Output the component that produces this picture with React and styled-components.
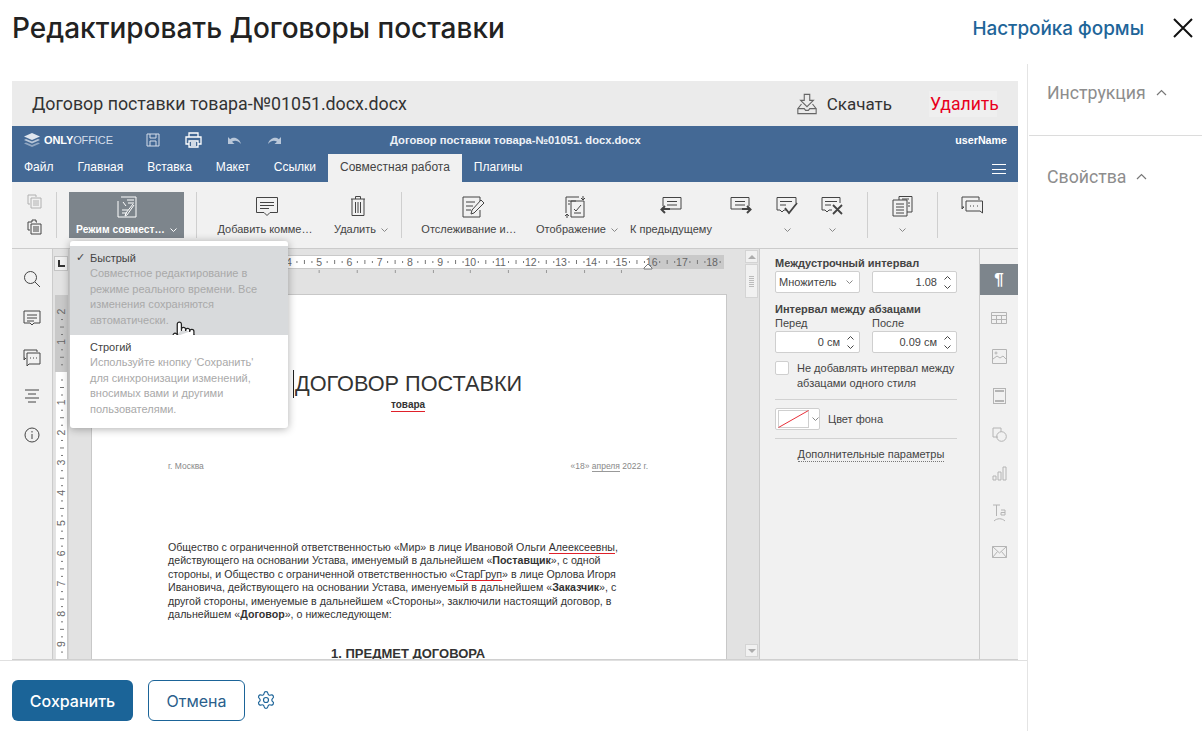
import styled, { createGlobalStyle } from 'styled-components';
import { Pointer, Settings } from 'lucide-react';

const GlobalStyle = createGlobalStyle`
  html, body { margin: 0; padding: 0; background: #fff; }
  body { font-family: Roboto, "Liberation Sans", sans-serif; color: #222; }
  * { box-sizing: border-box; }
`;

const Page = styled.div`
  width: 1202px;
  height: 731px;
  overflow: hidden;
  display: flex;
  flex-direction: column;
`;

const Header = styled.header`
  height: 64px;
  flex: none;
  display: flex;
  align-items: center;
  padding: 0 9px 8px 12px;
`;

const Title = styled.h1`
  margin: 0;
  flex: 1;
  font-family: Inter, Roboto, sans-serif;
  font-size: 28px;
  font-weight: 500;
  color: #222;
  white-space: nowrap;
`;

const FormLink = styled.a`
  font-family: Inter, Roboto, sans-serif;
  font-size: 18.9px;
  font-weight: 500;
  color: #1e6599;
  margin-right: 29px;
`;

const Columns = styled.div`
  flex: 1;
  min-height: 0;
  display: flex;
`;

const MainCol = styled.main`
  width: 1027px;
  flex: none;
  display: flex;
  flex-direction: column;
`;

const SideCol = styled.aside`
  flex: 1;
  border-left: 1px solid #e4e4e4;
`;

const SideSection = styled.div`
  height: 72px;
  padding: 17px 0 0 18px;
  margin-left: 1px;
  border-bottom: ${p => (p.$line ? '1px solid #dcdcdc' : 'none')};
  display: flex;
  align-items: flex-start;
  gap: 10px;
  font-size: 17.7px;
  color: #8d8d8d;
  line-height: 24px;
  & + & { height: 80px; padding-top: 29px; }
`;

const CardWrap = styled.div`
  height: 596px;
  flex: none;
  padding: 17px 9px 0 12px;
`;

const Card = styled.section`
  height: 579px;
  overflow: hidden;
  display: flex;
  flex-direction: column;
  border-bottom: 1px solid #d0d0d0;
`;

const FileBar = styled.div`
  height: 45px;
  flex: none;
  background: #ebebeb;
  display: flex;
  align-items: center;
  padding: 0 21px 0 20px;
  font-size: 17.8px;
  color: #333;
`;

const FileName = styled.div`
  flex: 1;
  white-space: nowrap;
`;

const Download = styled.div`
  display: flex;
  align-items: center;
  gap: 9px;
  margin-right: 37px;
  font-size: 17px;
`;

const Remove = styled.div`
  width: 68px;
  height: 26px;
  line-height: 26px;
  padding-left: 1px;
  background: #efefef;
  color: #e8001c;
  font-size: 17.6px;
  white-space: nowrap;
`;

const Editor = styled.div`
  flex: 1;
  min-height: 0;
  display: flex;
  flex-direction: column;
  font-family: "Liberation Sans", Arial, sans-serif;
  font-size: 11px;
`;

const TitleBar = styled.div`
  height: 28px;
  flex: none;
  background: #446995;
  display: flex;
  align-items: center;
  position: relative;
  color: #fff;
  padding: 0 11px 0 12px;
`;

const Logo = styled.div`
  width: 122px;
  display: flex;
  align-items: center;
  gap: 4px;
  font-size: 11px;
  font-weight: 700;
  letter-spacing: -0.1px;
  span { font-weight: 400; color: #d5deea; }
`;

const HeadIcons = styled.div`
  width: 140px;
  display: flex;
  align-items: center;
  gap: 25px;
`;

const DocTitle = styled.div`
  position: absolute;
  left: 378px;
  font-size: 11.2px;
  font-weight: 700;
  color: #eef2f7;
  white-space: nowrap;
`;

const UserName = styled.div`
  margin-left: auto;
  font-weight: 700;
  font-size: 10.7px;
`;

const TabBar = styled.nav`
  height: 28px;
  flex: none;
  background: #446995;
  display: flex;
  align-items: stretch;
`;

const Tab = styled.div`
  padding: 0 12px;
  font-size: 12px;
  line-height: 27px;
  color: ${p => (p.$active ? '#444' : '#fff')};
  background: ${p => (p.$active ? '#f1f1f1' : 'transparent')};
`;

const Burger = styled.div`
  margin: 10px 12px 0 auto;
  width: 14px;
  height: 10px;
  border-top: 1px solid #fff;
  border-bottom: 1px solid #fff;
  position: relative;
  &::after {
    content: '';
    position: absolute;
    left: 0;
    right: 0;
    top: 3.5px;
    height: 1px;
    background: #fff;
  }
`;

const Toolbar = styled.div`
  height: 67px;
  flex: none;
  background: #f1f1f1;
  border-bottom: 1px solid #cbcbcb;
  display: flex;
  align-items: flex-start;
  padding-top: 10px;
`;

const ClipCol = styled.div`
  width: 44px;
  height: 46px;
  padding-top: 2px;
  display: flex;
  flex-direction: column;
  align-items: center;
  gap: 10px;
`;

const VLine = styled.div`
  width: 1px;
  height: 46px;
  flex: none;
  background: #cfcfcf;
  margin-right: ${p => p.$mr || 0}px;
  margin-left: ${p => p.$ml || 0}px;
`;

const ToolItem = styled.div`
  width: ${p => p.$w}px;
  height: 46px;
  flex: none;
  display: flex;
  flex-direction: column;
  align-items: center;
  justify-content: space-between;
  padding: 3px 0 2px;
  margin-right: ${p => p.$mr || 0}px;
  color: #444;
  font-size: 11px;
  white-space: nowrap;
  background: ${p => (p.$on ? '#7d858c' : 'transparent')};
  & > svg:first-child { transform: translateX(${p => p.$shift || 0}px); }
`;

const ToolLabel = styled.div`
  display: flex;
  align-items: center;
  gap: 5px;
  height: 13px;
  line-height: 13px;
  color: ${p => (p.$on ? '#fff' : '#444')};
  font-weight: ${p => (p.$on ? 700 : 400)};
  font-size: ${p => (p.$on ? '10.3px' : '11px')};
`;

const Body = styled.div`
  flex: 1;
  min-height: 0;
  display: flex;
  position: relative;
  z-index: 2;
`;

const LeftBar = styled.div`
  width: 40px;
  flex: none;
  background: #f1f1f1;
  display: flex;
  flex-direction: column;
  align-items: center;
  gap: 19px;
  padding-top: 20px;
`;

const RulerCol = styled.div`
  width: 16px;
  flex: none;
  background: #e2e2e2;
  border-left: 1px solid #cbcbcb;
  padding: 7px 0 0 1px;
  overflow: hidden;
`;

const CornerBtn = styled.div`
  width: 14px;
  height: 15px;
  border: 1px solid #c4c4c4;
  background: #f1f1f1;
  margin-bottom: 24px;
  display: flex;
  align-items: center;
  justify-content: center;
  &::before {
    content: '';
    width: 5px;
    height: 5px;
    border-left: 2px solid #333;
    border-bottom: 2px solid #333;
  }
`;

const Canvas = styled.div`
  width: 677px;
  flex: none;
  background: #e2e2e2;
  overflow: hidden;
  padding-top: 6px;
  border-left: 1px solid #d4d4d4;
`;

const DocPage = styled.article`
  width: 636px;
  height: 400px;
  margin: 21px 0 0 22px;
  background: #fff;
  border: 1px solid #c8c8c8;
  border-bottom: none;
  padding: 0 0 0 76px;
  color: #333;
  position: relative;
`;

const DocHeading = styled.div`
  margin-top: 75px;
  margin-left: 125px;
  font-size: 21.7px;
  line-height: 28px;
  color: #333;
  white-space: nowrap;
  border-left: 1px solid #222;
  padding-left: 1px;
  width: fit-content;
`;

const DocSub = styled.div`
  margin: 0 0 0 223px;
  font-size: 10px;
  font-weight: 700;
  line-height: 13px;
  width: fit-content;
  border-bottom: 1px solid #e0202a;
`;

const CityRow = styled.div`
  margin-top: 49px;
  width: 480px;
  display: flex;
  justify-content: space-between;
  font-size: 8.5px;
  color: #888;
  line-height: 10px;
`;

const Para = styled.p`
  margin: 70px 0 0;
  font-size: 10.65px;
  line-height: 13.45px;
  white-space: nowrap;
  color: #333;
`;

const RedMark = styled.span`
  border-bottom: 1px solid #e0202a;
`;

const GrayMark = styled.span`
  border-bottom: 1px solid #999;
`;

const Section = styled.div`
  margin: 27px 0 0 163px;
  font-size: 13px;
  line-height: 10px;
  font-weight: 700;
  white-space: nowrap;
`;

const ScrollBar = styled.div`
  width: 15px;
  flex: none;
  background: #e2e2e2;
  border-right: 1px solid #cbcbcb;
  padding: 1px 1px 2px 0;
  display: flex;
  flex-direction: column;
  align-items: center;
`;

const ScrollBtn = styled.div`
  width: 13px;
  height: 13px;
  background: #f1f1f1;
  border: 1px solid #d4d4d4;
  display: flex;
  align-items: center;
  justify-content: center;
  margin-top: ${p => (p.$bottom ? 'auto' : '0')};
  &::before {
    content: '';
    border-left: 4px solid transparent;
    border-right: 4px solid transparent;
    border-bottom: ${p => (p.$bottom ? '0' : '4px solid #adadad')};
    border-top: ${p => (p.$bottom ? '4px solid #adadad' : '0')};
  }
`;

const ScrollThumb = styled.div`
  width: 13px;
  height: 34px;
  margin-top: 1px;
  background: #f1f1f1;
  border: 1px solid #d4d4d4;
  display: flex;
  flex-direction: column;
  align-items: center;
  justify-content: center;
  gap: 1px;
  i { display: block; width: 5px; height: 1px; background: #bbb; }
`;

const Props = styled.div`
  width: 220px;
  flex: none;
  background: #f1f1f1;
  border-right: 1px solid #cbcbcb;
  padding: 7px 22px 0 15px;
  color: #444;
`;

const PropTitle = styled.div`
  font-weight: 700;
  font-size: 11px;
  line-height: 14px;
  margin-top: ${p => p.$mt || 0}px;
  white-space: nowrap;
`;

const PropRow = styled.div`
  display: flex;
  justify-content: space-between;
  margin-top: ${p => p.$mt || 0}px;
`;

const PropCell = styled.div`
  width: 85px;
`;

const PropLabel = styled.div`
  font-size: 11px;
  line-height: 15px;
`;

const Field = styled.div`
  width: 85px;
  height: 22px;
  background: #fff;
  border: 1px solid #cfcfcf;
  border-radius: 2px;
  display: flex;
  align-items: center;
  justify-content: ${p => (p.$select ? 'space-between' : 'flex-end')};
  padding: ${p => (p.$select ? '0 6px 0 3px' : '0 5px 0 0')};
  font-size: 11px;
  color: #444;
  gap: 7px;
`;

const Spin = styled.div`
  display: flex;
  flex-direction: column;
  gap: 5px;
`;

const CheckRow = styled.div`
  display: flex;
  gap: 8px;
  margin-top: 8px;
`;

const CheckBox = styled.div`
  width: 14px;
  height: 14px;
  flex: none;
  background: #fff;
  border: 1px solid #cfcfcf;
  border-radius: 2px;
`;

const CheckText = styled.div`
  font-size: 11px;
  line-height: 15px;
`;

const Rule = styled.div`
  height: 1px;
  background: #d2d2d2;
  margin-top: ${p => p.$mt}px;
`;

const ColorRow = styled.div`
  display: flex;
  align-items: center;
  gap: 8px;
  margin-top: 8px;
`;

const Swatch = styled.div`
  width: 45px;
  height: 22px;
  background: #fff;
  border: 1px solid #cfcfcf;
  border-radius: 2px;
  display: flex;
  align-items: center;
  gap: 3px;
  padding-left: 2px;
`;

const MoreLink = styled.div`
  width: fit-content;
  margin: 9px auto 0;
  padding-left: 10px;
  span { border-bottom: 1px dotted #777; line-height: 13px; display: block; }
`;

const RightTabs = styled.div`
  flex: 1;
  background: #f1f1f1;
  padding-top: 15px;
  display: flex;
  flex-direction: column;
  align-items: center;
`;

const RightTab = styled.div`
  width: 100%;
  height: 39px;
  display: flex;
  align-items: center;
  justify-content: center;
`;

const ActiveTab = styled.div`
  width: 100%;
  height: 31px;
  background: #7d858c;
  color: #fff;
  font-size: 17px;
  font-weight: 700;
  display: flex;
  align-items: center;
  justify-content: center;
  margin-bottom: 3px;
`;

const Popover = styled.div`
  position: absolute;
  left: 58px;
  top: -8px;
  width: 218px;
  height: 187px;
  padding: 5px 0 4px;
  background: #fff;
  border-radius: 3px;
  box-shadow: 0 1px 8px rgba(0, 0, 0, 0.32);
  z-index: 5;
`;

const ModeRow = styled.div`
  height: 89px;
  padding: 4px 10px 0 20px;
  position: relative;
  background: ${p => (p.$on ? '#d8dadc' : '#fff')};
`;

const ModeName = styled.div`
  font-size: 11px;
  line-height: 16px;
  color: #444;
  position: relative;
  ${p => p.$checked && `
    &::before {
      content: '✓';
      position: absolute;
      left: -14px;
      top: 0;
      font-family: "DejaVu Sans", sans-serif;
      font-weight: 700;
    }
  `}
`;

const ModeDesc = styled.div`
  width: 176px;
  font-size: 11px;
  line-height: 15.7px;
  color: #a9a9a9;
`;

const HandCursor = styled.div`
  position: absolute;
  left: 101px;
  top: 74px;
  line-height: 0;
`;

const Footer = styled.footer`
  flex: 1;
  border-top: 1px solid #e0e0e0;
  display: flex;
  align-items: flex-start;
  padding: 19px 0 0 12px;
`;

const SaveBtn = styled.button`
  width: 121px;
  height: 41px;
  border: none;
  border-radius: 6px;
  background: #1b6498;
  color: #fff;
  font: 500 16px Inter, Roboto, sans-serif;
`;

const CancelBtn = styled.button`
  width: 97px;
  height: 41px;
  margin-left: 15px;
  border: 1px solid #1b6498;
  border-radius: 6px;
  background: #fff;
  color: #2a5f8c;
  font: 400 16px Inter, Roboto, sans-serif;
`;

const GearBtn = styled.div`
  margin: 10px 0 0 11px;
  line-height: 0;
  color: #1e6599;
`;

const Glyph = ({ w = 24, h = 24, c = '#444', sw = 1, children }) => (
  <svg width={w} height={h} viewBox={`0 0 ${w} ${h}`} fill="none" stroke={c} strokeWidth={sw}>
    {children}
  </svg>
);

const Caret = ({ c = '#888', up }) => (
  <svg width="7" height="4" viewBox="0 0 7 4" fill="none" stroke={c} strokeWidth="1">
    <path d={up ? 'M0.5 3.5L3.5 0.5L6.5 3.5' : 'M0.5 0.5L3.5 3.5L6.5 0.5'} />
  </svg>
);

const Chevron = () => (
  <svg width="11" height="7" viewBox="0 0 11 7" fill="none" stroke="#777" strokeWidth="1.2" style={{ marginTop: 8 }}>
    <path d="M1 6L5.5 1.5L10 6" />
  </svg>
);

const Bubble = () => (
  <>
    <path d="M1.5 2.5H22.5V17.5H15L12 20.5L9 17.5H1.5Z" />
    <path d="M5 7.5H19M5 10.5H19M5 13.5H14" />
  </>
);

// undo arrow; redo is the same shape mirrored
const HistoryArrow = ({ flip }) => (
  <svg width="15" height="9" viewBox="0 0 15 9" fill="#b9c7d9" style={{ transform: flip ? 'scaleX(-1)' : 'none' }}>
    <path d="M1 1V8H7.5L5 5.8C8 4 11 4.8 14 8C12.5 2.5 7 0 3.2 3.2Z" />
  </svg>
);

function Ruler() {
  const step = 30.23;
  const origin = 98;
  const nums = Array.from({ length: 19 }, (_, i) => i);
  return (
    <svg width="654" height="18" viewBox="0 0 654 18" style={{ display: 'block', marginLeft: 1 }}>
      <rect x="0" y="0" width="654" height="14" fill="#c9c9c9" />
      <rect x="0" y="1" width="579" height="12" fill="#fff" />
      {nums.map(n => (
        <g key={n}>
          <text x={origin + n * step} y="11" fontSize="10.5" fill="#666" textAnchor="middle" fontFamily="Liberation Sans">
            {n > 0 ? n : ''}
          </text>
          <rect x={origin + n * step + 7.5} y="6" width="1" height="2" fill="#777" />
          <rect x={origin + n * step + 15} y="5" width="1" height="4" fill="#777" />
          <rect x={origin + n * step + 22.5} y="6" width="1" height="2" fill="#777" />
        </g>
      ))}
      {[5, 6.26, 7.52, 8.78, 10, 11.26, 12.52, 13.78, 15].map(n => (
        <rect key={n} x={origin + n * step - 0.5} y="15" width="1" height="3" fill="#999" />
      ))}
      <path d="M574 13L578 9L582 13V14H574Z" fill="#fff" stroke="#777" />
    </svg>
  );
}

function SideRuler() {
  const rows = [-2, -1, 0, 1, 2, 3, 4, 5, 6, 7, 8, 9];
  return (
    <svg width="13" height="366" viewBox="0 0 13 366" style={{ display: 'block', marginLeft: 1 }}>
      <rect width="12.5" height="366" fill="#fff" stroke="#c9c9c9" />
      <rect width="13" height="77" fill="#c9c9c9" />
      {rows.map(n => {
        const y = 77 + n * 30.23;
        return (
          <g key={n}>
            {n !== 0 && (
              <text
                transform={`translate(10 ${y}) rotate(-90)`}
                fontSize="10.5"
                fill="#666"
                textAnchor="middle"
                fontFamily="Liberation Sans"
              >
                {Math.abs(n)}
              </text>
            )}
            <rect x="6" y={y + 7.5} width="2" height="1" fill="#777" />
            <rect x="5" y={y + 15} width="4" height="1" fill="#777" />
            <rect x="6" y={y + 22.5} width="2" height="1" fill="#777" />
          </g>
        );
      })}
    </svg>
  );
}

export default function App() {
  return (
    <>
      <GlobalStyle />
      <Page>
        <Header>
          <Title>Редактировать Договоры поставки</Title>
          <FormLink>Настройка формы</FormLink>
          <svg width="20" height="20" viewBox="0 0 20 20" stroke="#111" strokeWidth="2">
            <path d="M1 1L19 19M19 1L1 19" />
          </svg>
        </Header>
        <Columns>
          <MainCol>
            <CardWrap>
              <Card>
                <FileBar>
                  <FileName>Договор поставки товара-№01051.docx.docx</FileName>
                  <Download>
                    <svg width="22" height="22" viewBox="0 0 22 24" fill="none" stroke="#666" strokeWidth="1.2">
                      <path d="M8 1.5H14V8H18L11 15L4 8H8Z" />
                      <path d="M5 12L1 17V22.5H21V17L17 12" />
                      <path d="M1 17H8L9.5 19H12.5L14 17H21" />
                    </svg>
                    Скачать
                  </Download>
                  <Remove>Удалить</Remove>
                </FileBar>
                <Editor>
                  <TitleBar>
                    <Logo>
                      <svg width="16" height="14" viewBox="0 0 16 14" fill="#dfe6ef">
                        <path d="M8 0L16 3.5L8 7L0 3.5Z" />
                        <path d="M2 6L8 8.6L14 6L16 7L8 10.5L0 7Z" opacity="0.75" />
                        <path d="M2 9.5L8 12L14 9.5L16 10.5L8 14L0 10.5Z" opacity="0.5" />
                      </svg>
                      <div>ONLY<span>OFFICE</span></div>
                    </Logo>
                    <HeadIcons>
                      <Glyph w={14} h={14} c="#d5deea">
                        <path d="M1 1H13V13H1ZM4 1V5H10V1M4 13V8H10V13" />
                      </Glyph>
                      <Glyph w={17} h={16} c="#fff" sw={1.3}>
                        <path d="M4 5V1H13V5M4 12H1V5H16V12H13M4 9H13V15H4ZM6 11H11M6 13H11" />
                      </Glyph>
                      <HistoryArrow />
                      <HistoryArrow flip />
                    </HeadIcons>
                    <DocTitle>Договор поставки товара-№01051. docx.docx</DocTitle>
                    <UserName>userName</UserName>
                  </TitleBar>
                  <TabBar>
                    <Tab>Файл</Tab>
                    <Tab>Главная</Tab>
                    <Tab>Вставка</Tab>
                    <Tab>Макет</Tab>
                    <Tab>Ссылки</Tab>
                    <Tab $active>Совместная работа</Tab>
                    <Tab>Плагины</Tab>
                    <Burger />
                  </TabBar>
                  <Toolbar>
                    <ClipCol>
                      <Glyph w={15} h={15} c="#b0b0b0">
                        <path d="M1 1H9V3M1 1V10H3M4 4H14V14H4ZM6 7H12M6 9H12M6 11H12" />
                      </Glyph>
                      <Glyph w={15} h={16} c="#444">
                        <path d="M1 3H5V1H9V3H10M1 3V11H3M4 5H14V15H4ZM6 8H12M6 10H12M6 12H12" />
                      </Glyph>
                    </ClipCol>
                    <VLine $mr={12} />
                    <ToolItem $w={115} $mr={12} $on>
                      <Glyph w={22} h={24} c="#fff">
                        <path d="M5 2H20V22H2V6M7 7L10 11M11 5H18M12 8H18M6 15H12M6 18H11M18 10L11 20L9 21L10 18L17 9" />
                      </Glyph>
                      <ToolLabel $on>
                        Режим совмест… <Caret c="#fff" />
                      </ToolLabel>
                    </ToolItem>
                    <VLine />
                    <ToolItem $w={136} $shift={2}>
                      <Glyph w={24} h={22}><Bubble /></Glyph>
                      <ToolLabel>Добавить комме…</ToolLabel>
                    </ToolItem>
                    <ToolItem $w={56} $mr={12} $shift={-3}>
                      <Glyph w={16} h={22}>
                        <path d="M1 4H15M5.5 4V1.5H10.5V4M2 4V20.5H14V4M5.5 7V18M8 7V18M10.5 7V18" />
                      </Glyph>
                      <ToolLabel>Удалить <Caret /></ToolLabel>
                    </ToolItem>
                    <VLine />
                    <ToolItem $w={134} $shift={4}>
                      <Glyph w={24} h={24}>
                        <path d="M19 6V2H2V22H19V15M5 7H14M5 11H12M5 15H10M10 19L11 15L20 5L23 8L13 18Z" />
                      </Glyph>
                      <ToolLabel>Отслеживание и…</ToolLabel>
                    </ToolItem>
                    <ToolItem $w={82} $shift={-2}>
                      <Glyph w={22} h={24}>
                        <path d="M15 2H2V18M7 6H20V22H7ZM4 6H12M4 9H6M10 14L12 16L17 10M10 18H17M19 1V4M17 3L19 5L21 3M3 19V23M1 21L3 19L5 21" />
                      </Glyph>
                      <ToolLabel>Отображение <Caret /></ToolLabel>
                    </ToolItem>
                    <ToolItem $w={106}>
                      <Glyph w={24} h={22}>
                        <path d="M4 11V2.5H22V14H11M8 6.5H18M8 10H18" />
                        <path d="M11 14H3M6 11L2.5 14.5L6 18" strokeWidth="2" />
                      </Glyph>
                      <ToolLabel>К предыдущему</ToolLabel>
                    </ToolItem>
                    <ToolItem $w={34}>
                      <Glyph w={24} h={22}>
                        <path d="M20 11V2.5H2V14H13M6 6.5H16M6 10H16" />
                        <path d="M13 14H21M18 11L21.5 14.5L18 18" strokeWidth="2" />
                      </Glyph>
                    </ToolItem>
                    <ToolItem $w={58}>
                      <Glyph w={24} h={22}>
                        <path d="M12 15H9L7 17L5 15H2V2.5H21V8M5 6.5H17M5 10H11" />
                        <path d="M10 13L14 18L22 8" strokeWidth="1.8" />
                      </Glyph>
                      <ToolLabel><Caret /></ToolLabel>
                    </ToolItem>
                    <ToolItem $w={32} $mr={19}>
                      <Glyph w={24} h={22}>
                        <path d="M12 15H9L7 17L5 15H2V2.5H20V8M5 6.5H17M5 10H11" />
                        <path d="M13 10L22 19M22 10L13 19" strokeWidth="1.8" />
                      </Glyph>
                      <ToolLabel><Caret /></ToolLabel>
                    </ToolItem>
                    <VLine />
                    <ToolItem $w={69}>
                      <Glyph w={22} h={24}>
                        <path d="M7 5V1.5H20V17H15M4 5H15V21H1V5H4M4 9H12M4 12H12M4 15H12M4 18H12M10 4H17M16 8H18M16 11H18" />
                      </Glyph>
                      <ToolLabel><Caret /></ToolLabel>
                    </ToolItem>
                    <VLine />
                    <ToolItem $w={68}>
                      <Glyph w={24} h={20}>
                        <path d="M4 12H2V2H19V5M2 12V14L4 12" />
                        <path d="M6 6H22.5V18L20 16H6ZM10 11H11M13 11H14M17 11H18" />
                      </Glyph>
                    </ToolItem>
                  </Toolbar>
                  <Body>
                    <LeftBar>
                      <Glyph w={20} h={20}>
                        <circle cx="8.5" cy="8.5" r="6" />
                        <path d="M13 13L18 18" />
                      </Glyph>
                      <Glyph w={20} h={20}>
                        <path d="M2 3H18V15H12L10 17L8 15H2ZM5 7H15M5 10H15M5 13H12" />
                      </Glyph>
                      <Glyph w={20} h={20}>
                        <path d="M3 11H2V3H15V5M2 11V13L4 11" />
                        <path d="M5 6H18V17H7L5 19ZM8 11H9M11 11H12M14 11H15" />
                      </Glyph>
                      <Glyph w={20} h={20}>
                        <path d="M3 4H17M6 8H14M3 12H17M6 16H14" />
                      </Glyph>
                      <Glyph w={20} h={20}>
                        <circle cx="10" cy="10" r="7" />
                        <path d="M10 9V14M10 6V7.5" />
                      </Glyph>
                    </LeftBar>
                    <RulerCol>
                      <CornerBtn />
                      <SideRuler />
                    </RulerCol>
                    <Canvas>
                      <Ruler />
                      <DocPage>
                        <DocHeading>ДОГОВОР ПОСТАВКИ</DocHeading>
                        <DocSub>товара</DocSub>
                        <CityRow>
                          <div>г. Москва</div>
                          <div>«18» <GrayMark>апреля</GrayMark> 2022 г.</div>
                        </CityRow>
                        <Para>
                          Общество с ограниченной ответственностью «Мир» в лице Ивановой Ольги <RedMark>Алеексеевны</RedMark>,<br />
                          действующего на основании Устава, именуемый в дальнейшем «<b>Поставщик</b>», с одной<br />
                          стороны, и Общество с ограниченной ответственностью «<RedMark>СтарГруп</RedMark>» в лице Орлова Игоря<br />
                          Ивановича, действующего на основании Устава, именуемый в дальнейшем «<b>Заказчик</b>», с<br />
                          другой стороны, именуемые в дальнейшем «Стороны», заключили настоящий договор, в<br />
                          дальнейшем «<b>Договор</b>», о нижеследующем:
                        </Para>
                        <Section>1. ПРЕДМЕТ ДОГОВОРА</Section>
                      </DocPage>
                    </Canvas>
                    <ScrollBar>
                      <ScrollBtn />
                      <ScrollThumb>
                        <i /><i /><i /><i /><i /><i />
                      </ScrollThumb>
                      <ScrollBtn $bottom />
                    </ScrollBar>
                    <Props>
                      <PropTitle>Междустрочный интервал</PropTitle>
                      <PropRow $mt={1}>
                        <Field $select>
                          Множитель <Caret />
                        </Field>
                        <Field>
                          1.08
                          <Spin><Caret up c="#444" /><Caret c="#444" /></Spin>
                        </Field>
                      </PropRow>
                      <PropTitle $mt={9}>Интервал между абзацами</PropTitle>
                      <PropRow>
                        <PropCell>
                          <PropLabel>Перед</PropLabel>
                          <Field>
                            0 см
                            <Spin><Caret up c="#444" /><Caret c="#444" /></Spin>
                          </Field>
                        </PropCell>
                        <PropCell>
                          <PropLabel>После</PropLabel>
                          <Field>
                            0.09 см
                            <Spin><Caret up c="#444" /><Caret c="#444" /></Spin>
                          </Field>
                        </PropCell>
                      </PropRow>
                      <CheckRow>
                        <CheckBox />
                        <CheckText>Не добавлять интервал между абзацами одного стиля</CheckText>
                      </CheckRow>
                      <Rule $mt={8} />
                      <ColorRow>
                        <Swatch>
                          <svg width="31" height="18" viewBox="0 0 31 18" fill="#fff" stroke="#cfcfcf">
                            <rect x="0.5" y="0.5" width="30" height="17" />
                            <path d="M0.5 17.5L30.5 0.5" stroke="#e8303a" />
                          </svg>
                          <Caret />
                        </Swatch>
                        Цвет фона
                      </ColorRow>
                      <Rule $mt={8} />
                      <MoreLink><span>Дополнительные параметры</span></MoreLink>
                    </Props>
                    <RightTabs>
                      <ActiveTab>¶</ActiveTab>
                      <RightTab>
                        <Glyph w={16} h={12} c="#b4b4b4">
                          <path d="M0.5 0.5H15.5V11.5H0.5ZM0.5 3.5H15.5M0.5 7.5H15.5M5.5 3.5V11.5M10.5 3.5V11.5" />
                        </Glyph>
                      </RightTab>
                      <RightTab>
                        <Glyph w={15} h={15} c="#b4b4b4">
                          <path d="M0.5 0.5H14.5V14.5H0.5ZM1 10L5 7L8 9L11 7L14 10" />
                          <circle cx="4" cy="4" r="1" />
                        </Glyph>
                      </RightTab>
                      <RightTab>
                        <svg width="13" height="16" viewBox="0 0 13 16" fill="none" stroke="#b4b4b4">
                          <rect x="0.5" y="0.5" width="12" height="15" />
                          <path d="M2 3H11M2 13H11" strokeWidth="2" />
                        </svg>
                      </RightTab>
                      <RightTab>
                        <Glyph w={15} h={15} c="#b4b4b4">
                          <path d="M6 10H1V1H9V5" />
                          <circle cx="9.5" cy="9.5" r="4.8" />
                        </Glyph>
                      </RightTab>
                      <RightTab>
                        <Glyph w={15} h={15} c="#b4b4b4">
                          <path d="M1 10H4V14H1ZM6 6H9V14H6ZM11 1H14V14H11Z" />
                        </Glyph>
                      </RightTab>
                      <RightTab>
                        <svg width="15" height="18" viewBox="0 0 15 18" fill="none" stroke="#b4b4b4">
                          <path d="M1 1H8M4.5 1V12M9 6H13V11H9V8.5H13M2 17C5 14 10 14 13 17" />
                        </svg>
                      </RightTab>
                      <RightTab>
                        <Glyph w={15} h={12} c="#b4b4b4">
                          <path d="M0.5 0.5H14.5V11.5H0.5ZM0.5 0.5L7.5 7L14.5 0.5M0.5 11.5L5.5 5.5M14.5 11.5L9.5 5.5" />
                        </Glyph>
                      </RightTab>
                    </RightTabs>
                    <Popover>
                      <ModeRow $on>
                        <ModeName $checked>Быстрый</ModeName>
                        <ModeDesc>Совместное редактирование в режиме реального времени. Все изменения сохраняются автоматически.</ModeDesc>
                        <HandCursor>
                          <Pointer size={25} color="#222" fill="#fff" strokeWidth={1.2} />
                        </HandCursor>
                      </ModeRow>
                      <ModeRow>
                        <ModeName>Строгий</ModeName>
                        <ModeDesc>Используйте кнопку 'Сохранить' для синхронизации изменений, вносимых вами и другими пользователями.</ModeDesc>
                      </ModeRow>
                    </Popover>
                  </Body>
                </Editor>
              </Card>
            </CardWrap>
            <Footer>
              <SaveBtn>Сохранить</SaveBtn>
              <CancelBtn>Отмена</CancelBtn>
              <GearBtn><Settings size={20} strokeWidth={1.4} /></GearBtn>
            </Footer>
          </MainCol>
          <SideCol>
            <SideSection $line>Инструкция <Chevron /></SideSection>
            <SideSection>Свойства <Chevron /></SideSection>
          </SideCol>
        </Columns>
      </Page>
    </>
  );
}
